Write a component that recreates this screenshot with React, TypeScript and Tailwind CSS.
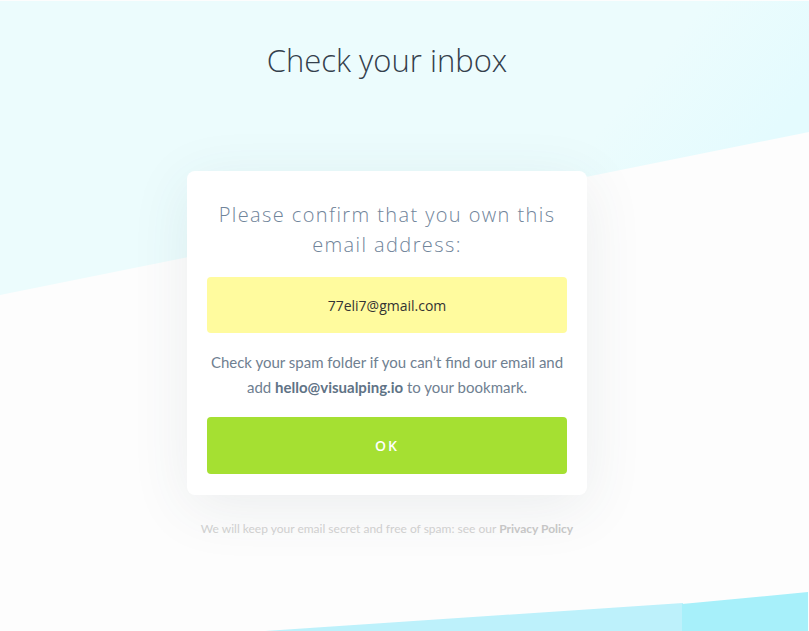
import React from "react";

export default function App() {
  return (
    <div className="relative h-[631px] w-full overflow-hidden bg-[#fdfdfd]" style={{ fontFamily: '"Open Sans", "Noto Sans", sans-serif' }}>
      <svg className="absolute inset-0 h-full w-full" viewBox="0 0 809 631" preserveAspectRatio="none">
        <defs>
          <linearGradient id="topg" x1="0" y1="0" x2="1" y2="0.3">
            <stop offset="0" stopColor="#ecfcfd" />
            <stop offset="0.8" stopColor="#ecfcfd" />
            <stop offset="1" stopColor="#e4fbfe" />
          </linearGradient>
        </defs>
        <polygon points="1,1 809,1 809,132 0,295 0,1" fill="url(#topg)" />
        <polygon points="265,631 683,603 683,631" fill="#bdf1fb" />
        <polygon points="682,604 808,592 808,631 682,631" fill="#a7f0fa" />
      </svg>
      <div className="relative flex w-[774px] flex-col items-center">
        <h1 className="mt-[38px] text-[31px] font-light leading-[44px] text-[#34404c]">Check your inbox</h1>
        <div className="mt-[89px] w-[400px] rounded-[8px] bg-white px-5 pb-[21px] pt-[29px] shadow-[0_12px_60px_rgba(60,80,90,0.09)]">
          <p className="text-center text-[20px] font-light leading-[30px] tracking-[0.07em] text-[#70849a]">
            Please confirm that you own this
            <br />
            email address:
          </p>
          <div className="mt-[17px] flex h-[56px] items-center justify-center rounded-[4px] bg-[#fffb9e] text-[14px] text-[#333] ">
            77eli7@gmail.com
          </div>
          <p className="mt-[17px] text-center text-[15px] leading-[25px] text-[#6f8091]" style={{ fontFamily: 'Lato, "Open Sans", sans-serif' }}>
            Check your spam folder if you can’t find our email and
            <br />
            add <span className="font-bold text-[#5f7386]">hello@visualping.io</span> to your bookmark.
          </p>
          <button className="mt-[17px] flex h-[57px] w-full items-center justify-center rounded-[4px] bg-[#a5e032] text-[14px] font-semibold tracking-[0.15em] text-white">
            OK
          </button>
        </div>
        <p className="mt-[25px] text-[12px] text-[#cfcfcf]" style={{ fontFamily: 'Lato, "Open Sans", sans-serif' }}>
          We will keep your email secret and free of spam: see our <span className="font-bold text-[#c6c6c6]">Privacy Policy</span>
        </p>
      </div>
    </div>
  );
}
